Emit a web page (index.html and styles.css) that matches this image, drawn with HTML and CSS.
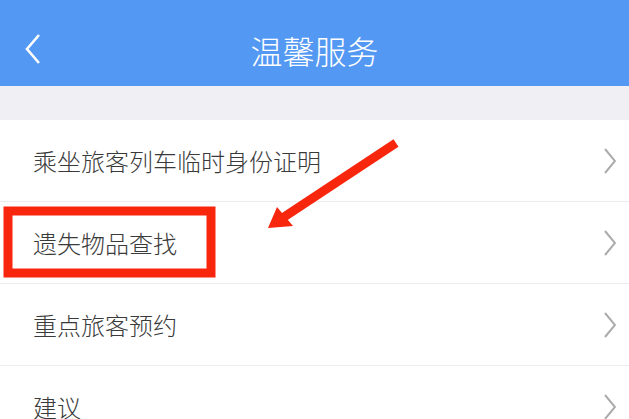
FILE: index.html
```html
<!DOCTYPE html>
<html lang="zh-CN">
<head>
    <meta charset="UTF-8">
    <meta name="viewport" content="width=device-width, initial-scale=1.0">
    <title>温馨服务</title>
    <link rel="stylesheet" href="styles.css">
</head>
<body>
    <header class="nav-bar">
        <span class="back">
            <svg width="18" height="30" viewBox="0 0 18 30">
                <polyline points="15,1 3,15 15,29" fill="none" stroke="#fff" stroke-width="2.6" stroke-linejoin="miter"/>
            </svg>
        </span>
        <h1 class="title">温馨服务</h1>
    </header>

    <div class="gap"></div>

    <ul class="menu">
        <li class="menu-item">
            <span class="label">乘坐旅客列车临时身份证明</span>
            <svg class="chevron" width="12" height="26" viewBox="0 0 12 26">
                <polyline points="1,1 11,13 1,25" fill="none" stroke="#ababab" stroke-width="2"/>
            </svg>
        </li>
        <li class="menu-item">
            <span class="label">遗失物品查找</span>
            <svg class="chevron" width="12" height="26" viewBox="0 0 12 26">
                <polyline points="1,1 11,13 1,25" fill="none" stroke="#ababab" stroke-width="2"/>
            </svg>
        </li>
        <li class="menu-item">
            <span class="label">重点旅客预约</span>
            <svg class="chevron" width="12" height="26" viewBox="0 0 12 26">
                <polyline points="1,1 11,13 1,25" fill="none" stroke="#ababab" stroke-width="2"/>
            </svg>
        </li>
        <li class="menu-item">
            <span class="label">建议</span>
            <svg class="chevron" width="12" height="26" viewBox="0 0 12 26">
                <polyline points="1,1 11,13 1,25" fill="none" stroke="#ababab" stroke-width="2"/>
            </svg>
        </li>
    </ul>

    <!-- red annotation drawn over the list -->
    <svg class="markup" width="629" height="419" viewBox="0 0 629 419">
        <rect x="8" y="211" width="203" height="62" fill="none" stroke="#f8260d" stroke-width="9"/>
        <line x1="396" y1="143" x2="284" y2="217" stroke="#f8260d" stroke-width="9"/>
        <polygon points="268,228 277,207 293,226" fill="#f8260d"/>
    </svg>
</body>
</html>
```

FILE: styles.css
```css
body {
    margin: 0;
    background: #efeff4;
    font-family: "Noto Sans CJK SC", "Noto Sans", sans-serif;
    color: #333;
    width: 629px;
    height: 419px;
    overflow: hidden;
    position: relative;
}
.nav-bar {
    height: 72px;
    padding-top: 14px;
    background: #5398f2;
    display: flex;
    align-items: center;
    justify-content: center;
    position: relative;
}
.back {
    position: absolute;
    left: 24px;
    top: 34px;
    display: flex;
}
.title {
    margin: 0;
    font-size: 32px;
    font-weight: 300;
    color: #fff;
    line-height: 1;
}
.gap {
    height: 34px;
}
.menu {
    list-style: none;
    margin: 0;
    padding: 0;
    background: #fff;
}
.menu-item {
    height: 81px;
    display: flex;
    align-items: center;
    justify-content: space-between;
    padding: 0 13px 0 33px;
    border-bottom: 1.5px solid #ececf0;
}
.label {
    font-size: 24px;
    font-weight: 300;
    line-height: 1;
    color: #3a3a3a;
}
.chevron {
    display: block;
}
.markup {
    position: absolute;
    top: 0;
    left: 0;
    pointer-events: none;
}
```
